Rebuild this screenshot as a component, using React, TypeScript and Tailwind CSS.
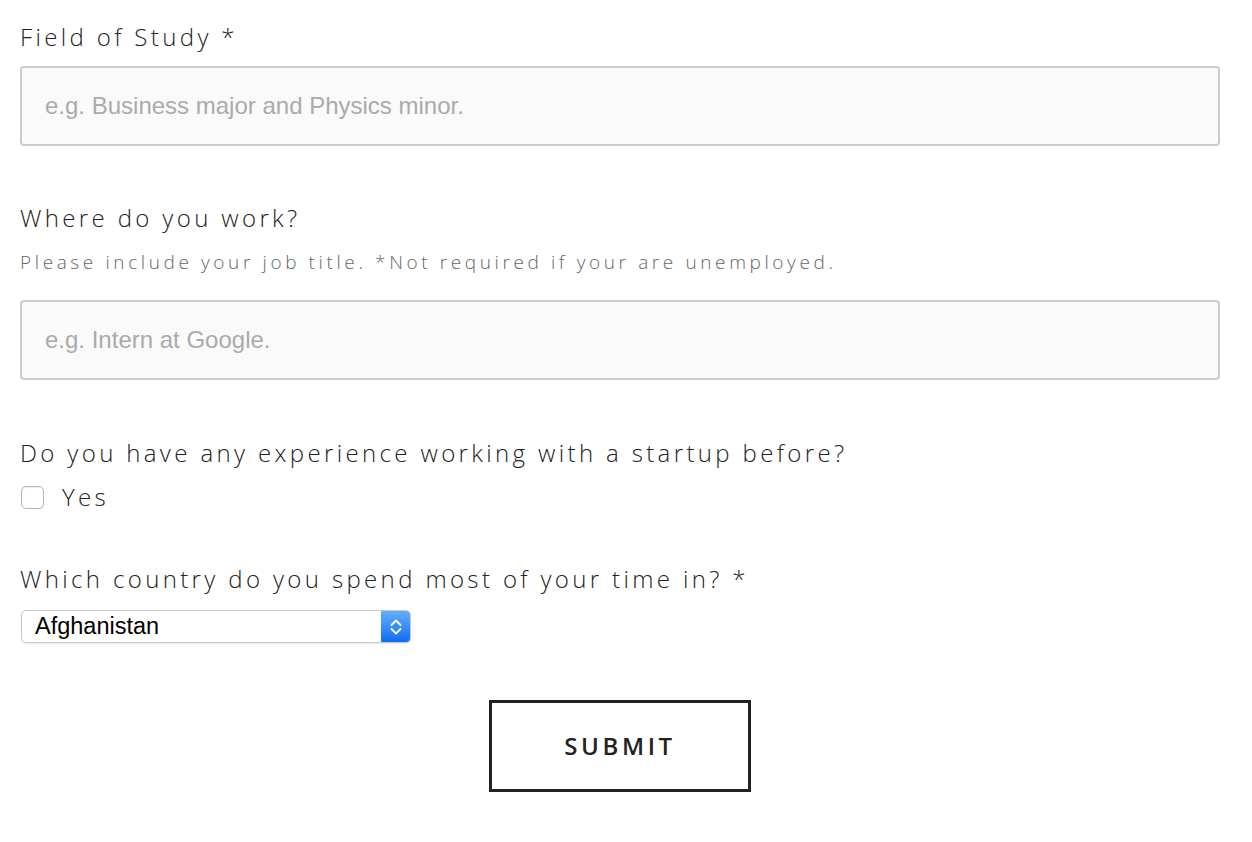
import React from 'react';

const labelCls =
  "block text-[24px] leading-[30px] font-light tracking-[0.14em] text-[#222] font-['Open_Sans','Lato',sans-serif]";
const inputCls =
  "block w-full h-[80px] rounded-[4px] border-2 border-[#cccccc] bg-[#fafafa] px-[23px] text-[24px] text-[#333] placeholder:text-[#aaaaaa] font-['Liberation_Sans',Arial,sans-serif] outline-none";

export default function App() {
  const [checked, setChecked] = React.useState(false);

  return (
    <div className="min-h-[842px] bg-white">
      <form className="w-[1200px] ml-[20px] pt-[22px]" onSubmit={(e) => e.preventDefault()}>
        <label className={labelCls}>Field of Study *</label>
        <input
          type="text"
          className={`${inputCls} mt-[14px]`}
          placeholder="e.g. Business major and Physics minor."
        />

        <label className={`${labelCls} mt-[57px]`}>Where do you work?</label>
        <p className="mt-[16px] text-[19px] leading-[26px] font-light tracking-[0.19em] text-[#666] font-['Open_Sans','Lato',sans-serif]">
          Please include your job title. *Not required if your are unemployed.
        </p>
        <input
          type="text"
          className={`${inputCls} mt-[25px]`}
          placeholder="e.g. Intern at Google."
        />

        <label className={`${labelCls} mt-[58px]`}>
          Do you have any experience working with a startup before?
        </label>
        <label className="mt-[17px] flex items-center h-[24px] cursor-pointer">
          <span
            onClick={() => setChecked(!checked)}
            className="ml-[1px] w-[23px] h-[23px] rounded-[5px] border border-[#b5b5b5] bg-white shadow-[inset_0_1px_1px_rgba(0,0,0,0.08)] flex items-center justify-center"
          >
            {checked && (
              <svg width="14" height="14" viewBox="0 0 14 14">
                <path d="M2 7l3 3 7-7" stroke="#333" strokeWidth="2" fill="none" />
              </svg>
            )}
          </span>
          <span className="ml-[18px] text-[24px] leading-[30px] font-light tracking-[0.14em] text-[#222] font-['Open_Sans','Lato',sans-serif]">
            Yes
          </span>
        </label>

        <label className={`${labelCls} mt-[55px]`}>
          Which country do you spend most of your time in? *
        </label>
        <div className="mt-[16px] ml-[1px] flex w-[390px] h-[33px] rounded-[5px] border border-[#c8c8c8] bg-white shadow-[0_1px_1px_rgba(0,0,0,0.08)] overflow-hidden">
          <div className="flex-1 flex items-center pl-[13px] text-[23.5px] text-black font-['Liberation_Sans',Arial,sans-serif]">
            Afghanistan
          </div>
          <div className="w-[29px] h-full bg-gradient-to-b from-[#62aefb] to-[#0b6cf5] flex items-center justify-center">
            <svg width="16" height="24" viewBox="0 0 16 24">
              <path d="M3.5 10l4.5-4.5 4.5 4.5" stroke="white" strokeWidth="1.8" fill="none" strokeLinecap="round" strokeLinejoin="round" />
              <path d="M3.5 14l4.5 4.5 4.5-4.5" stroke="white" strokeWidth="1.8" fill="none" strokeLinecap="round" strokeLinejoin="round" />
            </svg>
          </div>
        </div>

        <div className="mt-[57px] flex justify-center">
          <button
            type="submit"
            className="w-[262px] h-[92px] border-[3px] border-[#222] bg-white text-[24px] font-semibold tracking-[0.15em] text-[#222] font-['Open_Sans','Lato',sans-serif]"
          >
            SUBMIT
          </button>
        </div>
      </form>
    </div>
  );
}
